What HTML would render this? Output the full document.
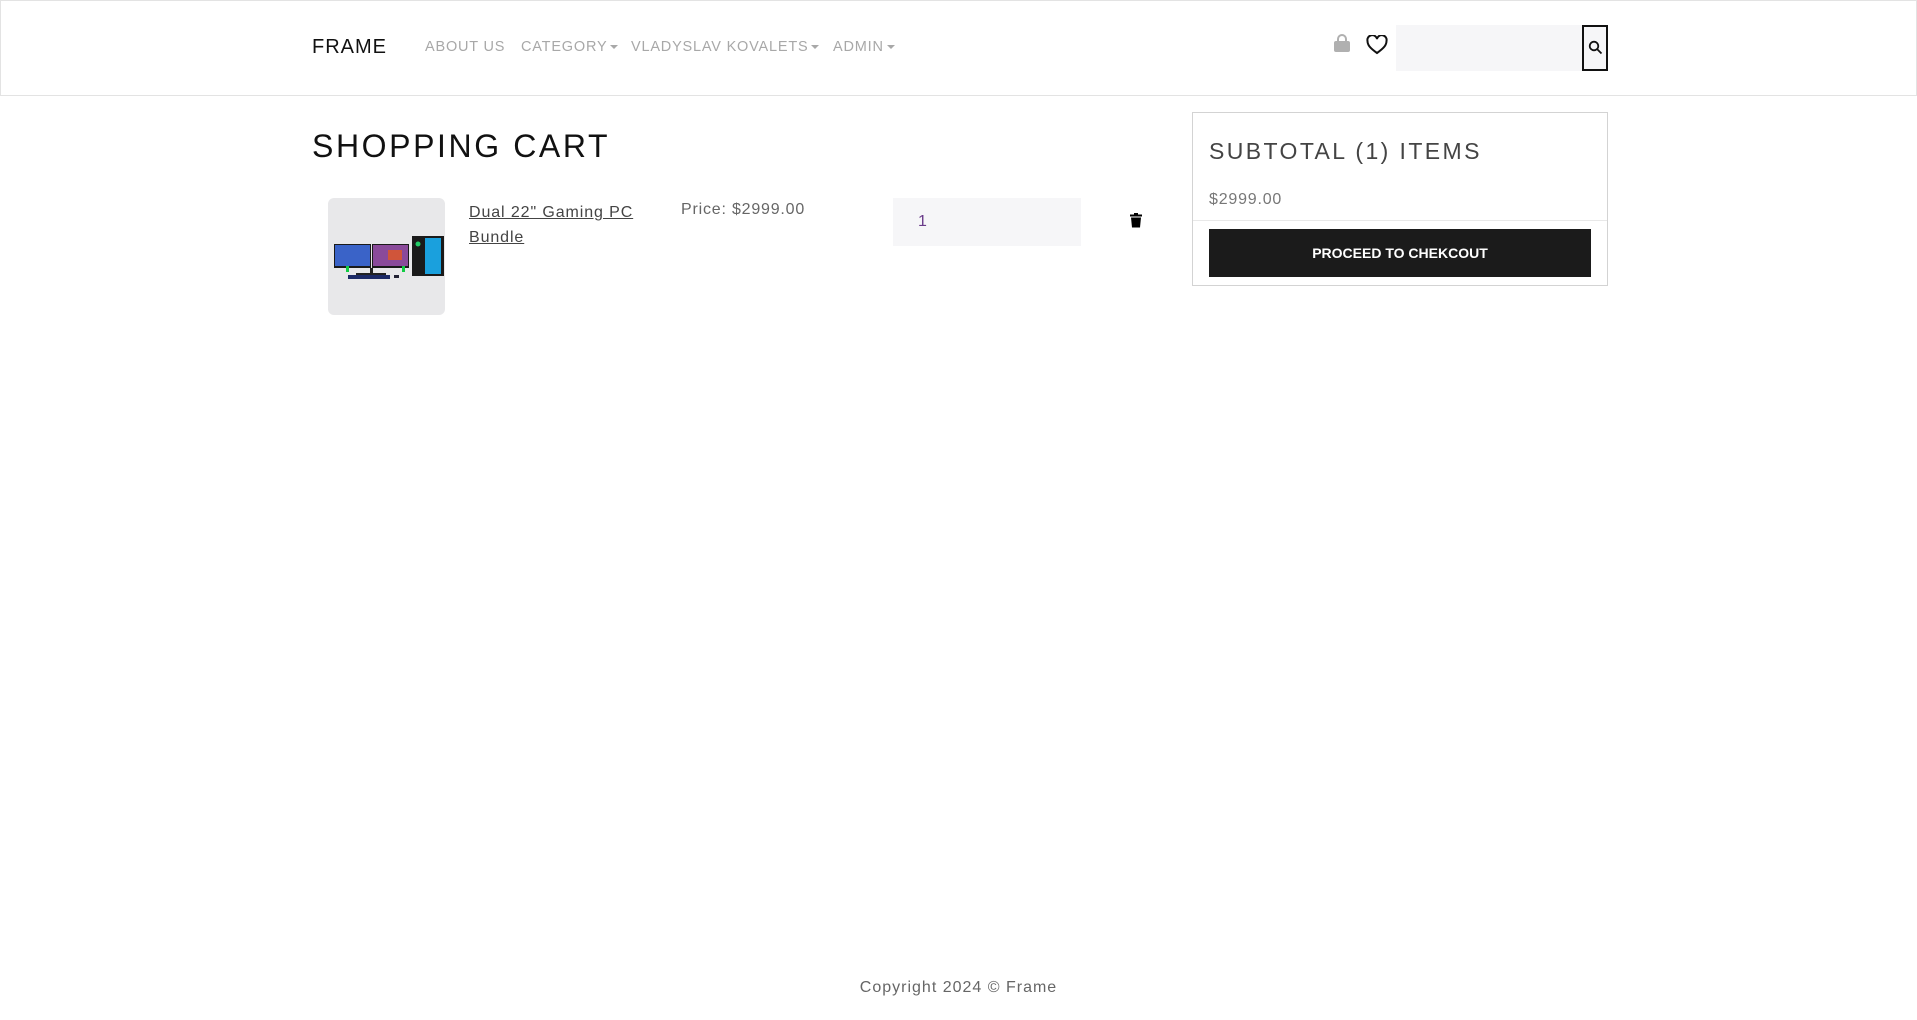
<!DOCTYPE html>
<html><head><meta charset="utf-8"><style>
*{box-sizing:border-box;margin:0;padding:0}
body{width:1917px;height:1020px;background:#fff;font-family:"Liberation Sans",sans-serif;position:relative;overflow:hidden;color:#222}
.hdr{position:absolute;left:0;top:0;width:1917px;height:96px;border:1px solid #e3e3e3}
.abs{position:absolute;white-space:nowrap}
.nav{color:#a8a8a8;font-size:14.5px;letter-spacing:.8px;top:39px}
.caret{display:inline-block;border-left:4px solid transparent;border-right:4px solid transparent;border-top:4px solid #a8a8a8;vertical-align:middle;margin-left:3px}
</style></head><body>
<div class="hdr"></div>
<div class="abs" style="left:312px;top:36px;font-size:20px;letter-spacing:1px;color:#111">FRAME</div>
<div class="abs nav" style="left:425px">ABOUT US</div>
<div class="abs nav" style="left:521px">CATEGORY<span class="caret"></span></div>
<div class="abs nav" style="left:631px">VLADYSLAV KOVALETS<span class="caret"></span></div>
<div class="abs nav" style="left:833px">ADMIN<span class="caret"></span></div>
<svg class="abs" style="left:1333px;top:34px" width="18" height="19" viewBox="0 0 18 19"><path d="M5 7V5a4 4 0 0 1 8 0v2" fill="none" stroke="#b0b0b0" stroke-width="2"/><rect x="1" y="7" width="16" height="11" rx="2" fill="#b0b0b0"/></svg>
<svg class="abs" style="left:1366px;top:35px" width="22" height="20" viewBox="0 0 22 20"><path d="M11 18C4 13 1.5 10 1.5 6A4.6 4.6 0 0 1 11 4a4.6 4.6 0 0 1 9.5 2c0 4-2.5 7-9.5 12z" fill="none" stroke="#111" stroke-width="2"/></svg>
<div class="abs" style="left:1396px;top:25px;width:187px;height:46px;background:#f6f6f8"></div>
<div class="abs" style="left:1582px;top:25px;width:26px;height:46px;border:2px solid #111;background:#f6f6f8"></div>
<svg class="abs" style="left:1588px;top:40px" width="15" height="15" viewBox="0 0 15 15"><circle cx="6" cy="6" r="4.3" fill="none" stroke="#111" stroke-width="1.8"/><path d="M9 9l4.5 4.5" stroke="#111" stroke-width="1.8"/></svg>

<div class="abs" style="left:312px;top:128px;font-size:32px;letter-spacing:2.6px;color:#111">SHOPPING CART</div>
<div class="abs" style="left:328px;top:198px;width:117px;height:117px;border-radius:6px;background:#e8e8ea;overflow:hidden">
<svg width="117" height="117" viewBox="0 0 117 117">
<rect x="6" y="46" width="37" height="24" fill="#1a1a1a"/><rect x="7" y="47" width="35" height="21" fill="#3a63c8"/>
<rect x="44" y="46" width="37" height="24" fill="#1a1a1a"/><rect x="45" y="47" width="35" height="21" fill="#8a4a9a"/><rect x="60" y="52" width="14" height="10" fill="#d0553a"/>
<rect x="42" y="70" width="3" height="7" fill="#222"/><rect x="28" y="75" width="30" height="2" fill="#222"/>
<rect x="20" y="77" width="42" height="4" fill="#1c2a66"/><rect x="66" y="77" width="5" height="3" fill="#223"/>
<rect x="18" y="68" width="3" height="6" fill="#1c4"/><rect x="74" y="68" width="3" height="6" fill="#1c4"/>
<rect x="84" y="38" width="32" height="40" fill="#1a1a1a"/><rect x="97" y="40" width="16" height="36" fill="#1aa0dd"/><circle cx="90" cy="46" r="2.5" fill="#2c6"/></svg></div>
<div class="abs" style="left:469px;top:200px;font-size:16px;line-height:25px;letter-spacing:.9px;color:#444;text-decoration:underline">Dual 22" Gaming PC<br>Bundle</div>
<div class="abs" style="left:681px;top:201px;font-size:16px;letter-spacing:.8px;color:#666">Price: $2999.00</div>
<div class="abs" style="left:893px;top:198px;width:188px;height:48px;background:#f6f6f8"></div>
<div class="abs" style="left:918px;top:213px;font-size:16px;color:#6a3b8a">1</div>
<svg class="abs" style="left:1130px;top:213px" width="12" height="15" viewBox="0 0 12 15"><rect x="0" y="1.5" width="12" height="2" fill="#000"/><rect x="4" y="0" width="4" height="2" fill="#000"/><path d="M1 4.5h10l-1 10H2z" fill="#000"/></svg>

<div class="abs" style="left:1192px;top:112px;width:416px;height:174px;border:1px solid #d3d3d3"></div>
<div class="abs" style="left:1209px;top:138px;font-size:23px;letter-spacing:2.4px;color:#444">SUBTOTAL (1) ITEMS</div>
<div class="abs" style="left:1209px;top:191px;font-size:16px;letter-spacing:.8px;color:#777">$2999.00</div>
<div class="abs" style="left:1193px;top:220px;width:414px;height:1px;background:#e8e8e8"></div>
<div class="abs" style="left:1209px;top:229px;width:382px;height:48px;background:#1b1b1b;color:#fff;font-weight:bold;font-size:14px;text-align:center;line-height:48px">PROCEED TO CHEKCOUT</div>

<div class="abs" style="left:0;width:1917px;text-align:center;top:979px;font-size:16px;letter-spacing:1px;color:#666">Copyright 2024 © Frame</div>
</body></html>
